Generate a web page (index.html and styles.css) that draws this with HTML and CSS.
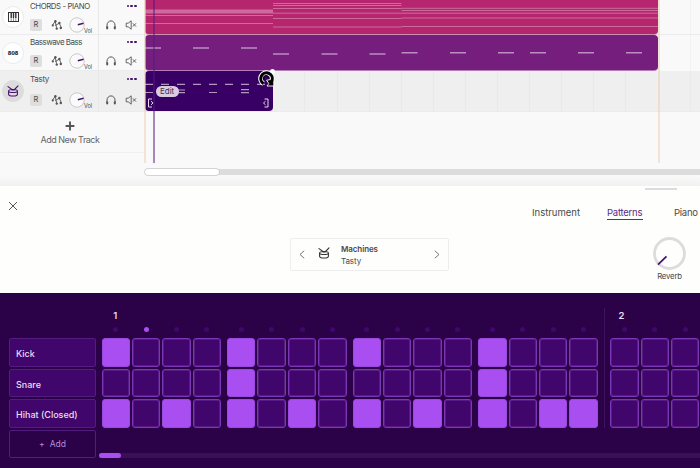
FILE: index.html
```html
<!DOCTYPE html>
<html lang="en">
<head>
    <meta charset="UTF-8">
    <meta name="viewport" content="width=device-width, initial-scale=1.0">
    <title>Studio - Patterns</title>
    <link rel="stylesheet" href="styles.css">
</head>
<body>

<!-- Shared icons -->
<svg class="sprite" width="0" height="0">
    <symbol id="route" viewBox="0 0 12 12">
        <path d="M1.6 6 L4.2 2.4 L5.6 8.8 M4.2 6.5 L8.3 4.2 L10.3 8.6" fill="none" stroke="#555" stroke-width="0.9"/>
        <circle cx="1.8" cy="6.4" r="1.1" fill="#555"/>
        <circle cx="4.4" cy="2.2" r="1.2" fill="#555"/>
        <circle cx="5.8" cy="9.6" r="1.2" fill="#555"/>
        <circle cx="8.4" cy="4" r="1.2" fill="#555"/>
        <circle cx="9.8" cy="9" r="1.2" fill="#555"/>
    </symbol>
    <symbol id="knob" viewBox="0 0 16 16">
        <circle cx="8" cy="8" r="7.2" fill="#fafafa" stroke="#c4c4c4" stroke-width="0.9"/>
        <path d="M8.8 7.7 L14.6 6.2" stroke="#43106f" stroke-width="1.4"/>
    </symbol>
    <symbol id="phones" viewBox="0 0 12 12">
        <path d="M2 8.5 V6.2 A4 4.3 0 0 1 10 6.2 V8.5" fill="none" stroke="#555" stroke-width="1"/>
        <rect x="1.2" y="7.2" width="2" height="3.2" rx="0.8" fill="#555"/>
        <rect x="8.8" y="7.2" width="2" height="3.2" rx="0.8" fill="#555"/>
    </symbol>
    <symbol id="mute" viewBox="0 0 12 12">
        <path d="M1.2 4.2 H3.2 L6.2 1.8 V10.2 L3.2 7.8 H1.2 Z M7.8 4.3 L11 7.6 M11 4.3 L7.8 7.6" fill="none" stroke="#555" stroke-width="0.9"/>
    </symbol>
    <symbol id="drum" viewBox="0 0 12 12">
        <path d="M1.6 6 V9.2 C1.6 11.6 10.4 11.6 10.4 9.2 V6 M1.6 6 C1.6 4 10.4 4 10.4 6 C10.4 8 1.6 8 1.6 6 M1 1.6 L6 5.2 M11 0.8 L7 5" fill="none" stroke="currentColor" stroke-width="1.1" stroke-linecap="round"/>
    </symbol>
</svg>

<div class="arranger">
    <div class="tracks">
        <div class="track">
            <div class="avatar">
                <svg width="11" height="10" viewBox="0 0 11 10"><rect x="0.5" y="0.5" width="10" height="9" fill="#fff" stroke="#333"/><path d="M3.2 0 V6 M5.5 0 V6 M7.8 0 V6" stroke="#333" stroke-width="1.4"/><path d="M3.2 6 V10 M5.5 6 V10 M7.8 6 V10" stroke="#333" stroke-width="0.5"/></svg>
            </div>
            <div class="track-main">
                <div class="name caps">CHORDS - PIANO</div>
                <div class="controls"><span class="rec">R</span><svg class="route"><use href="#route"/></svg><svg class="vol"><use href="#knob"/></svg><small>Vol</small></div>
            </div>
            <div class="track-side">
                <div class="dots"><i></i><i></i><i></i></div>
                <div class="controls"><svg><use href="#phones"/></svg><svg><use href="#mute"/></svg></div>
            </div>
        </div>
        <div class="track second">
            <div class="avatar"><b>808</b></div>
            <div class="track-main">
                <div class="name">Basswave Bass</div>
                <div class="controls"><span class="rec">R</span><svg class="route"><use href="#route"/></svg><svg class="vol"><use href="#knob"/></svg><small>Vol</small></div>
            </div>
            <div class="track-side">
                <div class="dots"><i></i><i></i><i></i></div>
                <div class="controls"><svg><use href="#phones"/></svg><svg><use href="#mute"/></svg></div>
            </div>
        </div>
        <div class="track selected">
            <div class="avatar"><svg width="12" height="12"><use href="#drum"/></svg></div>
            <div class="track-main">
                <div class="name">Tasty</div>
                <div class="controls"><span class="rec">R</span><svg class="route"><use href="#route"/></svg><svg class="vol"><use href="#knob"/></svg><small>Vol</small></div>
            </div>
            <div class="track-side">
                <div class="dots"><i></i><i></i><i></i></div>
                <div class="controls"><svg><use href="#phones"/></svg><svg><use href="#mute"/></svg></div>
            </div>
        </div>
        <div class="add-track">
            <svg width="10" height="10" viewBox="0 0 10 10"><path d="M5 0.6 V9.4 M0.6 5 H9.4" stroke="#555" stroke-width="1.9"/></svg>
            <span>Add New Track</span>
        </div>
    </div>

    <div class="timeline">
        <div class="lane">
            <div class="clip chords">
                <svg width="513" height="35" stroke="#fff" stroke-opacity="0.32">
                    <path d="M0 11.5 H128" stroke-width="4"/>
                    <path d="M0 15.5 H128 M0 23.5 H128"/>
                    <path d="M128 3.5 H256.5 M128 5.5 H256.5 M128 8.5 H256.5 M128 13.2 H256.5 M128 18.5 H256.5 M128 27 H256.5"/>
                    <path d="M256.5 8.3 H513 M256.5 10.5 H513 M256.5 13.2 H513 M256.5 18 H513 M256.5 26.5 H513"/>
                </svg>
            </div>
        </div>
        <div class="lane second">
            <div class="clip bass">
                <svg width="513" height="35" stroke="#fff" stroke-opacity="0.5" stroke-width="1.5">
                    <path d="M0 13 h16 m32 0 h16 m32 0 h16"/>
                    <path d="M128 19 h16 m32.5 0 h16 m32 0 h16"/>
                    <path d="M256.5 17.7 h16 m32.5 0 h16 m32 0 h16 m16 0 h16 m32 0 h16 m32 0 h16"/>
                </svg>
            </div>
        </div>
        <div class="lane selected">
            <div class="clip tasty">
                <svg width="128" height="40" stroke="#fff" stroke-opacity="0.6" stroke-width="1.2">
                    <path d="M0 13.4 H128" stroke-dasharray="8 8"/>
                    <path d="M0 21.5 h8 M32 19 h8 m-8 2.6 h8 M64 21.5 h8 M96 18.6 h8 m-8 3 h8"/>
                    <path d="M7 28 H3.5 V36 H7 M6 30.2 L8 32 L6 33.8 M119.5 28 H123 V36 H119.5 M120.5 30.2 L118.5 32 L120.5 33.8" fill="none" stroke-opacity="0.85" stroke-width="1"/>
                </svg>
                <span class="edit">Edit</span>
                <span class="handle"></span>
                <svg class="loop-cursor" width="17" height="17" viewBox="0 0 17 17">
                    <path d="M5.6 13.6 A5.8 5.8 0 1 1 13.9 10" fill="none" stroke="#fff" stroke-width="4.6"/>
                    <path d="M8.6 10.2 L15.8 9 V16 H9 L10.8 13.6 Z" fill="#000" stroke="#fff" stroke-width="0.9"/>
                    <path d="M5.6 13.6 A5.8 5.8 0 1 1 14 10.6" fill="none" stroke="#000" stroke-width="3"/>
                    <path d="M6.4 10 A2.4 2.4 0 1 1 10.4 8.6" fill="none" stroke="#000" stroke-width="1"/>
                </svg>
            </div>
        </div>
        <div class="lane-rest"></div>
        <div class="hscroll"><div class="thumb"></div></div>
        <div class="marker start"></div>
        <div class="marker end"></div>
        <div class="playhead"></div>
    </div>
</div>

<div class="drawer">
    <div class="grip"></div>
    <div class="drawer-top">
        <svg class="close" width="10" height="10" viewBox="0 0 10 10"><path d="M1 1 L9 9 M9 1 L1 9" stroke="#555" stroke-width="1"/></svg>
        <div class="tabs">
            <a class="tab instrument">Instrument</a>
            <a class="tab active">Patterns</a>
            <a class="tab piano">Piano</a>
        </div>
    </div>
    <div class="drawer-body">
        <div class="preset">
            <svg width="6" height="9" viewBox="0 0 6 9"><path d="M5.2 0.8 L1 4.5 L5.2 8.2" fill="none" stroke="#777"/></svg>
            <svg class="preset-icon" width="12" height="12"><use href="#drum"/></svg>
            <div class="preset-text">
                <strong>Machines</strong>
                <span>Tasty</span>
            </div>
            <svg width="6" height="9" viewBox="0 0 6 9"><path d="M0.8 0.8 L5 4.5 L0.8 8.2" fill="none" stroke="#777"/></svg>
        </div>
        <div class="reverb">
            <svg width="33" height="33" viewBox="0 0 33 33"><circle cx="16.5" cy="16.5" r="15" fill="none" stroke="#dcdcdc" stroke-width="2.8"/><path d="M5 27.7 L13.5 19.3" stroke="#43106f" stroke-width="1.7"/></svg>
            <span>Reverb</span>
        </div>
    </div>
</div>

<div class="sequencer">
    <div class="labels">
        <div class="label">Kick</div>
        <div class="label">Snare</div>
        <div class="label">Hihat (Closed)</div>
        <div class="label add"><span>+</span>Add</div>
    </div>
    <div class="steps">
        <div class="bars" id="bars"></div>
        <div class="step-scroll"><div class="step-thumb"></div></div>
    </div>
</div>

<script>
    const CURRENT_STEP = 1;
    const PATTERNS = [
        'x...x...x...x...',
        '....x.......x...',
        'x.x.x.x.x.x.x.xx'
    ];
    const bars = document.getElementById('bars');

    function addBar(number, steps, rows, current) {
        const bar = document.createElement('div');
        bar.className = 'bar';
        for (let first = 0; first < steps; first += 4) {
            const group = document.createElement('div');
            group.className = 'beat';
            for (let step = first; step < Math.min(first + 4, steps); step++) {
                const column = document.createElement('div');
                column.className = 'step';
                column.innerHTML = `<span class="count">${step === 0 ? number : ''}</span>` +
                    `<span class="led${step === current ? ' on' : ''}"></span>` +
                    rows.map(row => `<span class="pad${row[step] === 'x' ? ' on' : ''}"></span>`).join('');
                group.appendChild(column);
            }
            bar.appendChild(group);
        }
        bars.appendChild(bar);
    }

    addBar(1, 16, PATTERNS, CURRENT_STEP);
    addBar(2, 3, ['', '', ''], -1);
</script>

</body>
</html>
```

FILE: styles.css
```css
* {
    box-sizing: border-box;
}

body {
    margin: 0;
    width: 700px;
    height: 468px;
    overflow: hidden;
    font-family: Inter, "Liberation Sans", sans-serif;
    font-size: 9px;
    color: #4a4a4a;
    background: #fefefc;
}

svg {
    display: block;
    flex: none;
}

.sprite {
    position: absolute;
}

/* Arranger */
.arranger {
    display: flex;
    height: 186px;
    background: linear-gradient(#f9f9f9 176px, #f1f1f1);
}

.tracks {
    width: 144px;
    flex: none;
}

.track {
    display: grid;
    grid-template-columns: 30px 68px 1fr;
    height: 35px;
    border-bottom: 1px solid #ebebeb;
}

.track.second {
    height: 36px;
}

.track.selected {
    height: 41px;
    background: #efefef;
}

.avatar {
    width: 22px;
    height: 22px;
    margin: 6px 0 0 2px;
    border: 1px solid #ebebeb;
    border-radius: 50%;
    background: #fff;
    color: #43106f;
    display: flex;
    align-items: center;
    justify-content: center;
}

.avatar b {
    font-size: 5.2px;
    font-weight: 900;
    color: #333;
}

.second .avatar {
    margin-top: 7px;
}

.selected .avatar {
    margin-top: 9px;
    background: #dcdcdc;
    border-color: #dcdcdc;
}

.track-side {
    border-left: 1px solid #e8e8e8;
    padding: 0 7px 0 6px;
}

.name,
.dots {
    height: 12px;
    line-height: 12px;
    margin-bottom: 6px;
    white-space: nowrap;
    font-size: 8px;
    letter-spacing: -0.5px;
}

.name.caps {
    font-size: 7.8px;
    letter-spacing: -0.4px;
}

.second .name,
.second .dots {
    margin-top: 1px;
}

.selected .name,
.selected .dots {
    margin: 2px 0 8px;
}

.selected .name {
    letter-spacing: -0.3px;
}

.dots {
    display: flex;
    align-items: center;
    justify-content: flex-end;
    gap: 1px;
}

.dots i {
    width: 2.8px;
    height: 2.8px;
    border-radius: 50%;
    background: #43106f;
}

.controls {
    display: flex;
    align-items: center;
    height: 14px;
}

.track-side .controls {
    justify-content: space-between;
}

.controls svg {
    width: 12px;
    height: 12px;
}

.rec {
    width: 12px;
    height: 12px;
    border-radius: 2px;
    background: #dedede;
    line-height: 12px;
    text-align: center;
    font-size: 7.5px;
}

.controls .route {
    margin-left: 9px;
}

.controls .vol {
    width: 16px;
    height: 16px;
    margin-left: 6px;
}

.controls small {
    font-size: 5.5px;
    margin: 11px 0 0 -1px;
}

.add-track {
    height: 41px;
    display: flex;
    flex-direction: column;
    align-items: center;
    padding: 9px 4px 0 0;
    border-bottom: 1px solid #efefef;
    color: #666;
}

.add-track span {
    margin-top: 2px;
    line-height: 13px;
    letter-spacing: -0.5px;
}

/* Timeline */
.timeline {
    position: relative;
    flex: 1;
    min-width: 0;
}

.lane {
    height: 35px;
    padding-left: 0.6px;
    border-bottom: 1px solid #ebebeb;
    background: repeating-linear-gradient(90deg, #f2f2f2 0 1px, transparent 1px 32.1px);
}

.lane.second {
    height: 36px;
    border: none;
}

.lane.selected {
    height: 41px;
    background: repeating-linear-gradient(90deg, #e9e9e9 0 1px, #efefef 1px 32.1px);
}

.clip {
    position: relative;
    width: 513px;
    height: 35px;
    border-radius: 4px;
    overflow: hidden;
}

.chords {
    height: 34px;
    background: #b5266f;
    border-radius: 0 0 4px 4px;
    box-shadow: 0 1px 0 #cb8fb2;
}

.bass {
    background: #761e7e;
    box-shadow: 0 1px 0 #b37fb8;
}

.tasty {
    width: 128px;
    height: 40px;
    background: #380065;
    overflow: visible;
}

.edit {
    position: absolute;
    left: 11px;
    top: 15px;
    width: 23px;
    height: 11px;
    border-radius: 6px;
    background: #d8cce2;
    color: #43304f;
    font-size: 8px;
    line-height: 11px;
    text-align: center;
}

.handle {
    position: absolute;
    right: -2px;
    top: -2px;
    width: 5px;
    height: 5px;
    border-radius: 50%;
    background: #fff;
}

.loop-cursor {
    position: absolute;
    left: 113px;
    top: -1px;
}

.lane-rest {
    height: 57px;
}

.hscroll {
    height: 6px;
    margin-left: 1px;
    background: #dcdcdc;
    border-radius: 3px 0 0 3px;
}

.thumb {
    width: 74px;
    height: 6px;
    border-radius: 3px;
    background: #fff;
    box-shadow: 0 0 0 0.7px #c8c8c8;
}

.marker,
.playhead {
    position: absolute;
    top: 0;
    height: 163px;
    width: 2px;
}

.marker {
    background: rgba(235, 211, 190, 0.6);
}

.marker.start {
    left: 0;
}

.marker.end {
    left: 514px;
}

.playhead {
    left: 9px;
    background: rgba(81, 26, 125, 0.5);
}

/* Drawer */
.drawer {
    height: 107px;
    background: #fefefc;
}

.grip {
    width: 32px;
    height: 2px;
    margin-left: 645px;
    background: #dcdcdc;
    transform: translateY(2px);
}

.drawer-top {
    display: flex;
    align-items: flex-start;
    height: 50px;
    padding-left: 8px;
}

.close {
    margin-top: 13px;
}

.tabs {
    display: flex;
    margin: 17px 0 0 514px;
    white-space: nowrap;
}

.tab {
    height: 15px;
    line-height: 16px;
    font-size: 9.5px;
    margin-right: 28px;
}

.tab.instrument {
    width: 47px;
}

.tab.active {
    width: 36px;
    margin-right: 31px;
    color: #5b2a86;
    border-bottom: 1.5px solid #5b2a86;
    letter-spacing: -0.25px;
}

.tab.piano {
    width: 24px;
    margin-right: 0;
    letter-spacing: -0.25px;
}

.drawer-body {
    display: flex;
    padding-left: 290px;
}

.preset {
    display: flex;
    align-items: center;
    width: 159px;
    height: 33px;
    padding: 0 8px;
    border: 1px solid #eee;
    border-radius: 2px;
}

.preset-icon {
    margin: -3px 11px 0 13px;
    color: #333;
}

.preset-text {
    flex: 1;
    line-height: 12px;
    font-size: 8px;
    letter-spacing: -0.1px;
}

.preset-text strong,
.preset-text span {
    display: block;
}

.preset-text strong {
    font-weight: 600;
}

.reverb {
    display: flex;
    flex-direction: column;
    align-items: center;
    margin: -1px 0 0 204px;
    font-size: 7.8px;
    line-height: 10px;
    letter-spacing: -0.2px;
}

.reverb span {
    margin-top: 1px;
}

/* Sequencer */
.sequencer {
    display: flex;
    gap: 3px;
    height: 175px;
    padding-left: 9px;
    background: #2b0248;
    color: #e9dff0;
}

.labels {
    flex: none;
    width: 87px;
    padding-top: 45px;
    display: flex;
    flex-direction: column;
    gap: 2px;
}

.label {
    height: 28.5px;
    padding-left: 6px;
    border: 1px solid #541b80;
    border-radius: 2px;
    background: #41066c;
    line-height: 29px;
    font-size: 9px;
    font-weight: 500;
    white-space: nowrap;
}

.label.add {
    display: flex;
    justify-content: center;
    gap: 5px;
    padding: 0;
    background: none;
    color: #b58cd6;
    font-weight: 400;
    font-size: 8.5px;
    line-height: 27px;
}

.steps {
    flex: 1;
    min-width: 0;
    overflow: hidden;
}

.bars {
    display: flex;
    align-items: flex-start;
    height: 160px;
    padding: 15px 0 0 2.5px;
}

.bar {
    display: flex;
    flex: none;
    gap: 6px;
}

.bar + .bar {
    margin-left: 6px;
    padding-left: 5.5px;
    border-left: 1px solid #3e1360;
}

.beat {
    display: flex;
    gap: 2px;
}

.step {
    display: flex;
    flex-direction: column;
    align-items: center;
    width: 28.4px;
}

.count {
    height: 16px;
    line-height: 16px;
    margin-right: 1px;
    font-size: 9.5px;
    font-weight: 600;
}

.bar + .bar .count {
    margin-right: 6px;
}

.led {
    width: 5px;
    height: 5px;
    margin: 3px 0 6px;
    border-radius: 50%;
    background: #41066c;
}

.led.on {
    background: #a94ef0;
}

.pad {
    width: 28.4px;
    height: 28.5px;
    margin-bottom: 2px;
    border: 1px solid #7c35b5;
    box-shadow: inset 0 0 0 1px rgba(124, 53, 181, 0.4);
    border-radius: 3px;
    background: #41066c;
    flex: none;
}

.pad:last-child {
    margin-bottom: 0;
}

.pad.on {
    background: #a94ef0;
    border-color: #9c47e0;
    box-shadow: none;
}

.step-scroll {
    height: 5px;
    background: #390f55;
}

.step-thumb {
    width: 22px;
    height: 5px;
    border-radius: 3px;
    background: #a94ef0;
}
```
